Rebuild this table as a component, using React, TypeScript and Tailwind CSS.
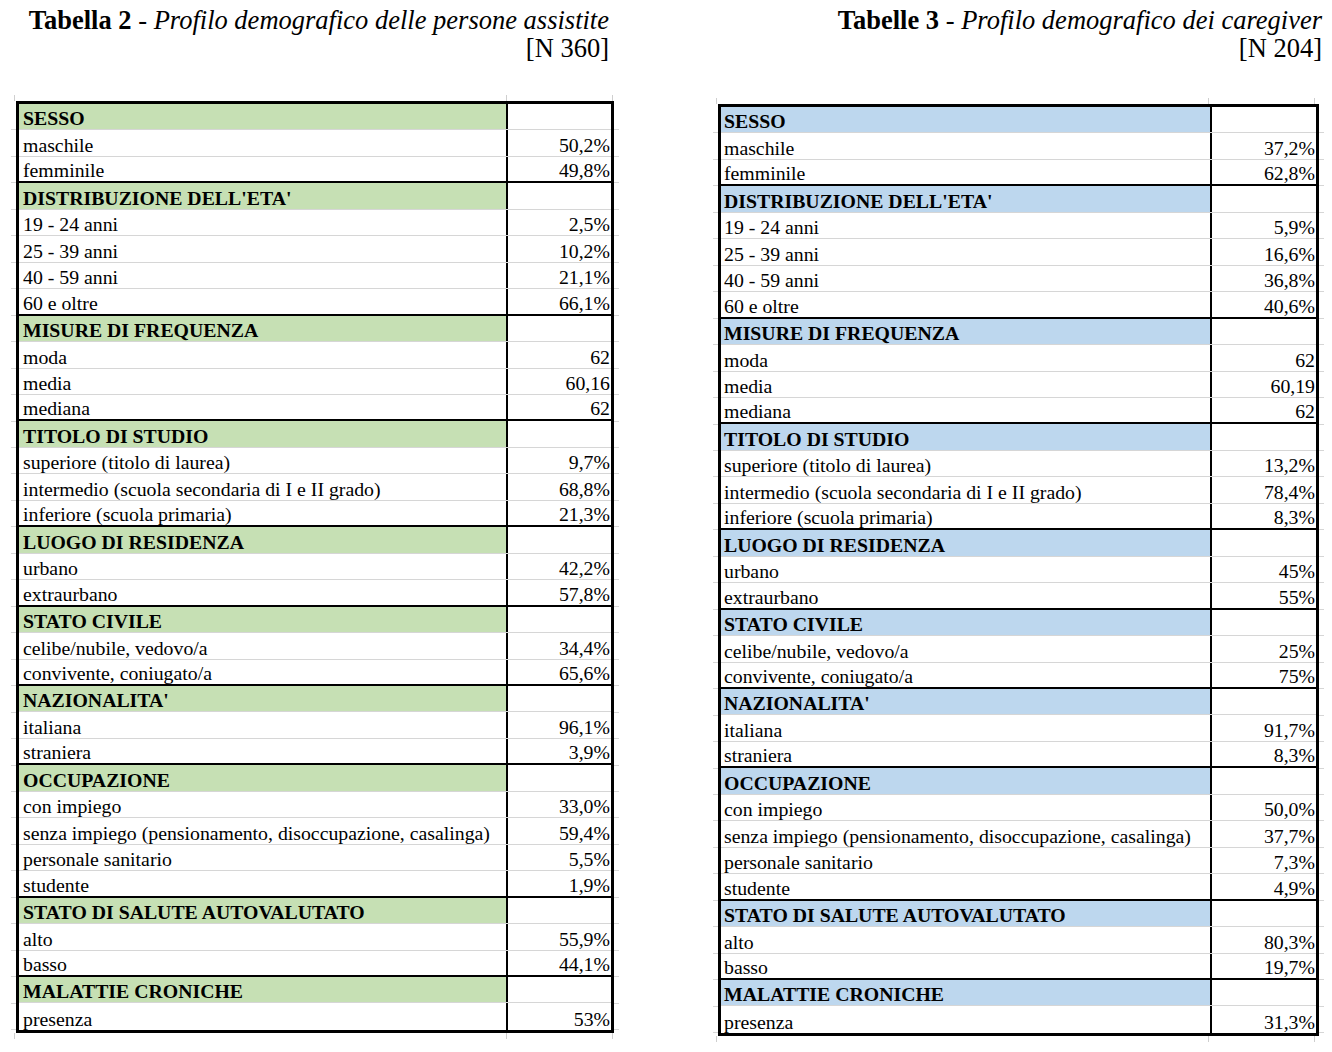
import React from "react";

type Group = {
  title: string;
  rows: [string, string][];
};

const assistite: Group[] = [
  { title: "SESSO", rows: [["maschile", "50,2%"], ["femminile", "49,8%"]] },
  {
    title: "DISTRIBUZIONE DELL'ETA'",
    rows: [
      ["19 - 24 anni", "2,5%"],
      ["25 - 39 anni", "10,2%"],
      ["40 - 59 anni", "21,1%"],
      ["60 e oltre", "66,1%"],
    ],
  },
  {
    title: "MISURE DI FREQUENZA",
    rows: [["moda", "62"], ["media", "60,16"], ["mediana", "62"]],
  },
  {
    title: "TITOLO DI STUDIO",
    rows: [
      ["superiore (titolo di laurea)", "9,7%"],
      ["intermedio (scuola secondaria di I e II grado)", "68,8%"],
      ["inferiore (scuola primaria)", "21,3%"],
    ],
  },
  { title: "LUOGO DI RESIDENZA", rows: [["urbano", "42,2%"], ["extraurbano", "57,8%"]] },
  {
    title: "STATO CIVILE",
    rows: [["celibe/nubile, vedovo/a", "34,4%"], ["convivente, coniugato/a", "65,6%"]],
  },
  { title: "NAZIONALITA'", rows: [["italiana", "96,1%"], ["straniera", "3,9%"]] },
  {
    title: "OCCUPAZIONE",
    rows: [
      ["con impiego", "33,0%"],
      ["senza impiego (pensionamento, disoccupazione, casalinga)", "59,4%"],
      ["personale sanitario", "5,5%"],
      ["studente", "1,9%"],
    ],
  },
  { title: "STATO DI SALUTE AUTOVALUTATO", rows: [["alto", "55,9%"], ["basso", "44,1%"]] },
  { title: "MALATTIE CRONICHE", rows: [["presenza", "53%"]] },
];

const caregiver: Group[] = [
  { title: "SESSO", rows: [["maschile", "37,2%"], ["femminile", "62,8%"]] },
  {
    title: "DISTRIBUZIONE DELL'ETA'",
    rows: [
      ["19 - 24 anni", "5,9%"],
      ["25 - 39 anni", "16,6%"],
      ["40 - 59 anni", "36,8%"],
      ["60 e oltre", "40,6%"],
    ],
  },
  {
    title: "MISURE DI FREQUENZA",
    rows: [["moda", "62"], ["media", "60,19"], ["mediana", "62"]],
  },
  {
    title: "TITOLO DI STUDIO",
    rows: [
      ["superiore (titolo di laurea)", "13,2%"],
      ["intermedio (scuola secondaria di I e II grado)", "78,4%"],
      ["inferiore (scuola primaria)", "8,3%"],
    ],
  },
  { title: "LUOGO DI RESIDENZA", rows: [["urbano", "45%"], ["extraurbano", "55%"]] },
  {
    title: "STATO CIVILE",
    rows: [["celibe/nubile, vedovo/a", "25%"], ["convivente, coniugato/a", "75%"]],
  },
  { title: "NAZIONALITA'", rows: [["italiana", "91,7%"], ["straniera", "8,3%"]] },
  {
    title: "OCCUPAZIONE",
    rows: [
      ["con impiego", "50,0%"],
      ["senza impiego (pensionamento, disoccupazione, casalinga)", "37,7%"],
      ["personale sanitario", "7,3%"],
      ["studente", "4,9%"],
    ],
  },
  { title: "STATO DI SALUTE AUTOVALUTATO", rows: [["alto", "80,3%"], ["basso", "19,7%"]] },
  { title: "MALATTIE CRONICHE", rows: [["presenza", "31,3%"]] },
];

type Tone = "green" | "blue";

function Row({
  label,
  value,
  header,
  groupEnd,
  tableEnd,
  tone,
}: {
  label: string;
  value?: string;
  header?: boolean;
  groupEnd: boolean;
  tableEnd: boolean;
  tone: Tone;
}) {
  const line = tableEnd
    ? ""
    : groupEnd
      ? "border-b-2 border-black"
      : "border-b border-[#d6d6d6]";
  const fill = header ? (tone === "green" ? "bg-[#c6e0b4]" : "bg-[#bdd7ee]") : "";
  const firstCol = tone === "green" ? "w-[489px] pl-[4px]" : "w-[491px] pl-[3px]";

  return (
    <div className={`flex h-[26.46px] ${line}`}>
      <div
        className={`flex items-end whitespace-nowrap border-r-2 border-black pb-[1px] leading-[20px] ${firstCol} ${fill} ${header ? "font-bold" : ""}`}
      >
        {label}
      </div>
      <div className="flex flex-1 items-end justify-end pr-[1px] pb-[1px] leading-[20px]">
        {value}
      </div>
    </div>
  );
}

function DataTable({ groups, tone }: { groups: Group[]; tone: Tone }) {
  const flat = groups.flatMap((g) => [
    { label: g.title, value: "", header: true, groupEnd: false },
    ...g.rows.map(([label, value], i) => ({
      label,
      value,
      header: false,
      groupEnd: i === g.rows.length - 1,
    })),
  ]);

  return (
    <div className="bg-[linear-gradient(to_right,transparent_3px,#cfcfcf_3px,#cfcfcf_4px,transparent_4px,transparent_495px,#cfcfcf_495px,#cfcfcf_496px,transparent_496px,transparent_601px,#cfcfcf_601px,#cfcfcf_602px,transparent_602px)] py-[6px]">
      <div className="bg-white bg-[repeating-linear-gradient(to_bottom,transparent_0,transparent_25.46px,#d6d6d6_25.46px,#d6d6d6_26.46px)] bg-[position:0_3px] px-[5px]">
        <div className="border-[3px] border-black bg-white text-[19.8px] text-black">
          {flat.map((r, i) => (
            <Row
              key={i}
              label={r.label}
              value={r.value}
              header={r.header}
              groupEnd={r.groupEnd}
              tableEnd={i === flat.length - 1}
              tone={tone}
            />
          ))}
        </div>
      </div>
    </div>
  );
}

function Caption({ strong, title, n }: { strong: string; title: string; n: string }) {
  return (
    <div className="text-right text-[26.5px] leading-[28px] text-black">
      <div>
        <span className="font-bold">{strong}</span> - <span className="italic">{title}</span>
      </div>
      <div>{n}</div>
    </div>
  );
}

export default function App() {
  return (
    <div className="flex h-[1052px] w-[1332px] bg-white font-['Liberation_Serif',_'Times_New_Roman',_serif]">
      <section className="ml-[11px] w-[608px] pt-[6px]">
        <div className="pr-[10px]">
          <Caption strong="Tabella 2" title="Profilo demografico delle persone assistite" n="[N 360]" />
        </div>
        <div className="mt-[33px]">
          <DataTable groups={assistite} tone="green" />
        </div>
      </section>

      <section className="ml-[94px] w-[611px] pt-[6px]">
        <div className="pr-[2px]">
          <Caption strong="Tabelle 3" title="Profilo demografico dei caregiver" n="[N 204]" />
        </div>
        <div className="mt-[36px]">
          <DataTable groups={caregiver} tone="blue" />
        </div>
      </section>
    </div>
  );
}
